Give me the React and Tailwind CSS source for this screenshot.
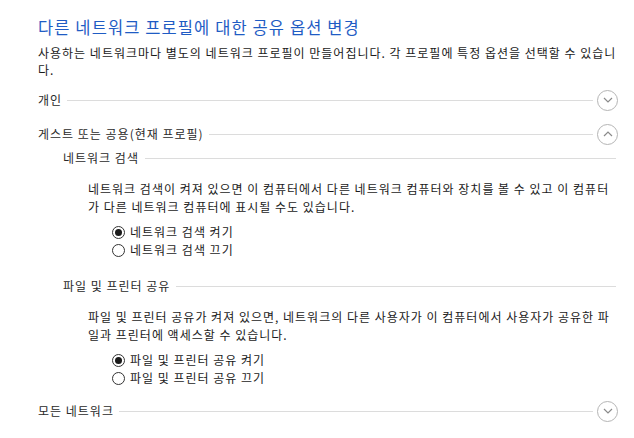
import React from "react";

const FONT = { fontFamily: '"Noto Sans CJK KR", "Noto Sans", sans-serif' };

function Chevron({ up }) {
  return (
    <div className="w-[21px] h-[21px] rounded-full border border-[#b5b5b5] flex items-center justify-center shrink-0">
      <svg width="10" height="6" viewBox="0 0 10 6" fill="none">
        {up ? (
          <path d="M1 5 L5 1 L9 5" stroke="#8a8a8a" strokeWidth="1.2" />
        ) : (
          <path d="M1 1 L5 5 L9 1" stroke="#8a8a8a" strokeWidth="1.2" />
        )}
      </svg>
    </div>
  );
}

function Radio({ checked, label }) {
  return (
    <div className="flex items-center h-[18px] leading-[18px]">
      <div className="w-[13px] h-[13px] rounded-full border border-[#333] bg-white flex items-center justify-center shrink-0">
        {checked && <div className="w-[7px] h-[7px] rounded-full bg-[#1a1a1a]" />}
      </div>
      <span className="ml-[5px] text-[12px] tracking-[1px] text-[#1a1a1a] whitespace-nowrap">{label}</span>
    </div>
  );
}

function SectionRow({ label, up, className }) {
  return (
    <div className={`flex items-center h-[22px] pl-[38px] pr-[16px] ${className}`}>
      <span className="text-[12px] tracking-[1px] text-[#2a2a2a] whitespace-nowrap">{label}</span>
      <div className="flex-1 h-px bg-[#dcdcdc] ml-[5px] mr-[4px]" />
      <Chevron up={up} />
    </div>
  );
}

function SubRow({ label, className }) {
  return (
    <div className={`flex items-center h-[16px] pl-[63px] pr-[18px] ${className}`}>
      <span className="text-[12px] tracking-[1px] text-[#2a2a2a] whitespace-nowrap">{label}</span>
      <div className="flex-1 h-px bg-[#dcdcdc] ml-[6px]" />
    </div>
  );
}

export default function App() {
  return (
    <div className="w-[634px] h-[438px] bg-white overflow-hidden flex flex-col" style={FONT}>
      <div className="pl-[38px] mt-[17px] h-[20px] leading-[20px] text-[16.5px] tracking-[1.1px] text-[#1f5cc4] whitespace-nowrap">
        다른 네트워크 프로필에 대한 공유 옵션 변경
      </div>
      <div className="pl-[38px] mt-[7px] text-[12px] leading-[17px] tracking-[1px] text-[#1a1a1a]">
        <div className="whitespace-nowrap">
          사용하는 네트워크마다 별도의 네트워크 프로필이 만들어집니다. 각 프로필에 특정 옵션을 선택할 수 있습니
        </div>
        <div>다.</div>
      </div>

      <SectionRow label="개인" className="mt-[11px]" />
      <SectionRow label="게스트 또는 공용(현재 프로필)" up className="mt-[12px]" />

      <SubRow label="네트워크 검색" className="mt-[5px]" />
      <div className="pl-[88px] mt-[14px] text-[12px] leading-[18px] tracking-[1px] text-[#1a1a1a]">
        <div className="whitespace-nowrap">
          네트워크 검색이 켜져 있으면 이 컴퓨터에서 다른 네트워크 컴퓨터와 장치를 볼 수 있고 이 컴퓨터
        </div>
        <div className="whitespace-nowrap">가 다른 네트워크 컴퓨터에 표시될 수도 있습니다.</div>
      </div>
      <div className="pl-[112px] mt-[7px] flex flex-col">
        <Radio checked label="네트워크 검색 켜기" />
        <Radio label="네트워크 검색 끄기" />
      </div>

      <SubRow label="파일 및 프린터 공유" className="mt-[19px]" />
      <div className="pl-[88px] mt-[14px] text-[12px] leading-[18px] tracking-[1px] text-[#1a1a1a]">
        <div className="whitespace-nowrap">
          파일 및 프린터 공유가 켜져 있으면, 네트워크의 다른 사용자가 이 컴퓨터에서 사용자가 공유한 파
        </div>
        <div className="whitespace-nowrap">일과 프린터에 액세스할 수 있습니다.</div>
      </div>
      <div className="pl-[112px] mt-[7px] flex flex-col">
        <Radio checked label="파일 및 프린터 공유 켜기" />
        <Radio label="파일 및 프린터 공유 끄기" />
      </div>

      <SectionRow label="모든 네트워크" className="mt-[13px]" />
    </div>
  );
}
